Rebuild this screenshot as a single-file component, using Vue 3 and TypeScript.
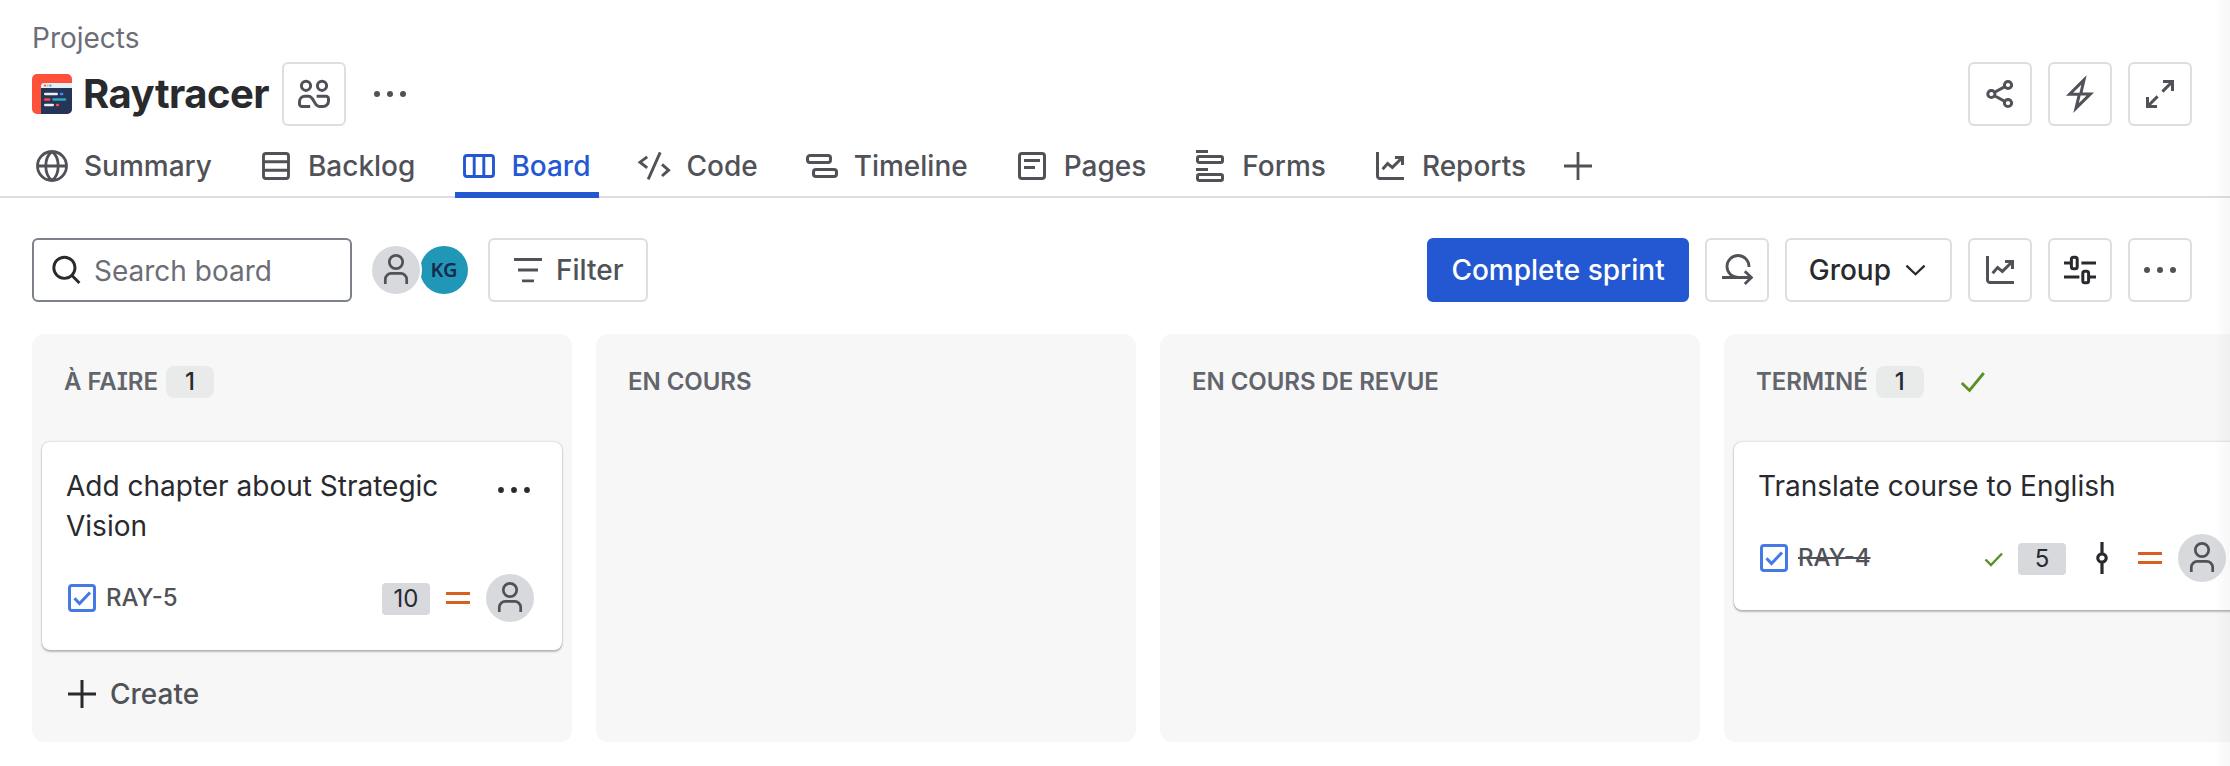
<script setup lang="ts">
interface Shape {
  d: string
  w?: number
}

const chart: Shape = {
  d: 'M1.75 1v12a1.25 1.25 0 0 0 1.25 1.25h12M4.3 9.6l2.5-2.8 2.4 1.9 4.9-4.8M10.5 3.75h3.75V7.5',
}

const icons: Record<string, Shape> = {
  globe: {
    d: 'M8 .75a7.25 7.25 0 1 0 0 14.5A7.25 7.25 0 0 0 8 .75zM8 .75C6 2.2 4.9 5 4.9 8S6 13.8 8 15.25C10 13.8 11.1 11 11.1 8S10 2.2 8 .75zM.75 8h14.5',
    w: 1.4,
  },
  backlog: {
    d: 'M3 1.75h10c.7 0 1.25.55 1.25 1.25v10c0 .7-.55 1.25-1.25 1.25H3c-.7 0-1.25-.55-1.25-1.25V3c0-.7.55-1.25 1.25-1.25zM1.75 5.9h12.5M1.75 10.1h12.5',
    w: 1.45,
  },
  board: {
    d: 'M2 2.75h12c.7 0 1.25.55 1.25 1.25v8c0 .7-.55 1.25-1.25 1.25H2C1.3 13.25.75 12.7.75 12V4c0-.7.55-1.25 1.25-1.25zM5.6 2.75v10.5M10.4 2.75v10.5',
    w: 1.45,
  },
  code: { d: 'M4.6 3.4L1 6.1l3.6 2.8M11.1 1.2L5.1 14.7M12 7.2l3.3 2.9L12 13', w: 1.45 },
  timeline: {
    d: 'M2 2.75h9a1.25 1.25 0 0 1 1.25 1.25v1a1.25 1.25 0 0 1-1.25 1.25H2A1.25 1.25 0 0 1 .75 5V4A1.25 1.25 0 0 1 2 2.75zM5 9.75h9A1.25 1.25 0 0 1 15.25 11v1A1.25 1.25 0 0 1 14 13.25H5A1.25 1.25 0 0 1 3.75 12v-1A1.25 1.25 0 0 1 5 9.75z',
  },
  pages: {
    d: 'M3 1.75h10c.7 0 1.25.55 1.25 1.25v10c0 .7-.55 1.25-1.25 1.25H3c-.7 0-1.25-.55-1.25-1.25V3c0-.7.55-1.25 1.25-1.25zM4 5.25h8M4 8.75h5.5',
  },
  forms: {
    d: 'M1 .75h6M1 9.75h6M2.6 3.25h10.8c.5 0 .85.35.85.85v1.3c0 .5-.35.85-.85.85H2.6c-.5 0-.85-.35-.85-.85V4.1c0-.5.35-.85.85-.85zM2.6 12.25h10.8c.5 0 .85.35.85.85v1.3c0 .5-.35.85-.85.85H2.6c-.5 0-.85-.35-.85-.85v-1.3c0-.5.35-.85.85-.85z',
  },
  chart,
  plus: { d: 'M8 1v14M1 8h14', w: 1.4 },
  team: {
    d: 'M4 1.6a2.3 2.3 0 1 0 0 4.6 2.3 2.3 0 0 0 0-4.6zM12 1.6a2.3 2.3 0 1 0 0 4.6 2.3 2.3 0 0 0 0-4.6zM6.1 14.25H2A1.25 1.25 0 0 1 .75 13v-1.1A2.75 2.75 0 0 1 3.5 9.15h1.7c3 0 2.600 5.100 5.600 5.100h1.700a2.750 2.750 0 0 0 2.750-2.750v-1.100A1.250 1.250 0 0 0 14 9.150H9.300',
    w: 1.5,
  },
  share: {
    d: 'M3.7 6.2a1.8 1.8 0 1 0 0 3.6 1.8 1.8 0 0 0 0-3.6zM12 1.7a1.8 1.8 0 1 0 0 3.6 1.8 1.8 0 0 0 0-3.6zM12 10.7a1.8 1.8 0 1 0 0 3.6 1.8 1.8 0 0 0 0-3.6zM5.3 7.1l5.1-2.8M5.3 8.9l5.1 2.8',
  },
  bolt: { d: 'M10 .95L2.8 8.1h4.9L6 15.05 13.2 7.950H8.350z', w: 1.5 },
  expand: { d: 'M9.5 1.75h4.75V6.5M14.25 1.75L9.2 6.8M6.5 14.25H1.75V9.5M1.75 14.25L6.8 9.2' },
  search: { d: 'M7.2 1.6a5.3 5.3 0 1 0 0 10.6 5.3 5.3 0 0 0 0-10.6zM11 10.7l3.7 3.8', w: 1.45 },
  filter: { d: 'M1 2.75h14M3 8h10M5 13.4h6', w: 1.4 },
  sprint: {
    d: 'M14 6.5v-.25A5.5 5.5 0 1 0 8.5 11.75M.5 11.75h14.7M11.9 8.6l3.3 3.15-3.3 3.2',
    w: 1.4,
  },
  sliders: {
    d: 'M0 4.5h3.2M8.7 4.5H16M0 11.5h7.7M12.8 11.5H16M4.7 1.6h.9c.6 0 1 .4 1 1v3.8c0 .6-.4 1-1 1h-.9c-.6 0-1-.4-1-1V2.6c0-.6.4-1 1-1zM10.4 8.6h.9c.6 0 1 .4 1 1v3.8c0 .6-.4 1-1 1h-.9c-.6 0-1-.4-1-1V9.6c0-.6.4-1 1-1z',
  },
  commit: { d: 'M8 0v5.8M8 10.2V16M8 5.9a2.1 2.1 0 1 0 0 4.2 2.1 2.1 0 0 0 0-4.2z', w: 1.6 },
  priority: { d: 'M2 5.75h12M2 10.25h12', w: 1.6 },
}

interface Tab {
  label: string
  icon: string
  active?: boolean
}

const tabs: Tab[] = [
  { label: 'Summary', icon: 'globe' },
  { label: 'Backlog', icon: 'backlog' },
  { label: 'Board', icon: 'board', active: true },
  { label: 'Code', icon: 'code' },
  { label: 'Timeline', icon: 'timeline' },
  { label: 'Pages', icon: 'pages' },
  { label: 'Forms', icon: 'forms' },
  { label: 'Reports', icon: 'chart' },
]

const headerActions = ['share', 'bolt', 'expand']

interface Card {
  title: string
  issue: string
  points: number
  done?: boolean
  commits?: boolean
  menu?: boolean
}

interface Column {
  name: string
  done?: boolean
  create?: boolean
  cards: Card[]
}

const columns: Column[] = [
  {
    name: 'À FAIRE',
    create: true,
    cards: [{ title: 'Add chapter about Strategic Vision', issue: 'RAY-5', points: 10, menu: true }],
  },
  { name: 'EN COURS', cards: [] },
  { name: 'EN COURS DE REVUE', cards: [] },
  {
    name: 'TERMINÉ',
    done: true,
    cards: [{ title: 'Translate course to English', issue: 'RAY-4', points: 5, done: true, commits: true }],
  },
]
</script>

<template>
  <div class="page">
    <header class="header">
      <div class="crumb">Projects</div>
      <div class="title-row">
        <svg class="logo" viewBox="0 0 40 40">
          <rect width="40" height="40" rx="5" fill="#ff5039" />
          <path d="M9 11.5A2.5 2.5 0 0 1 11.500 9H40v26a5 5 0 0 1-5 5H9z" fill="#253555" />
          <path d="M9 14v-2.500A2.500 2.500 0 0 1 11.500 9H40v5z" fill="#e6eff8" />
          <circle cx="13" cy="11.600" r="1.100" fill="#ff5039" />
          <circle cx="15.700" cy="11.600" r="1.100" fill="#f5b83d" />
          <circle cx="18.400" cy="11.600" r="1.100" fill="#2ba9c7" />
          <g stroke-width="2.400" stroke-linecap="round">
            <path d="M13.200 20h11.600M13.200 31h7.600" stroke="#e6eff8" />
            <path d="M29 20h1.200" stroke="#4688ff" />
            <path d="M13.200 25.500h4M25 31h1" stroke="#ff4a3d" />
            <path d="M21.500 25.500h11.500" stroke="#2ba9c7" />
          </g>
        </svg>
        <h1>Raytracer</h1>
        <button class="btn square team">
          <svg class="icon" viewBox="0 0 16 16"><path :d="icons.team.d" :stroke-width="icons.team.w" /></svg>
        </button>
        <svg class="dots more" viewBox="0 0 32 8">
          <circle cx="3" cy="4" r="3" /><circle cx="16" cy="4" r="3" /><circle cx="29" cy="4" r="3" />
        </svg>
        <div class="actions">
          <button v-for="name in headerActions" :key="name" class="btn square">
            <svg class="icon" viewBox="0 0 16 16">
              <path :d="icons[name].d" :stroke-width="icons[name].w ?? 1.5" />
            </svg>
          </button>
        </div>
      </div>
      <nav class="tabs">
        <a v-for="tab in tabs" :key="tab.label" class="tab" :class="{ active: tab.active }">
          <svg class="icon" viewBox="0 0 16 16">
            <path :d="icons[tab.icon].d" :stroke-width="icons[tab.icon].w ?? 1.5" />
          </svg>
          <span>{{ tab.label }}</span>
        </a>
        <svg class="icon add-tab" viewBox="0 0 16 16"><path :d="icons.plus.d" :stroke-width="icons.plus.w" /></svg>
      </nav>
    </header>

    <section class="toolbar">
      <div class="search">
        <svg class="icon" viewBox="0 0 16 16"><path :d="icons.search.d" :stroke-width="icons.search.w" /></svg>
        <span>Search board</span>
      </div>
      <div class="people">
        <div class="avatar ring">
          <svg viewBox="0 0 48 48">
            <circle cx="24" cy="16" r="6.700" />
            <path d="M13.300 38v-4.500a6 6 0 0 1 6-6.100h9.400a6 6 0 0 1 6 6.100V38" />
          </svg>
        </div>
        <div class="avatar initials">KG</div>
      </div>
      <button class="btn filter">
        <svg class="icon" viewBox="0 0 16 16"><path :d="icons.filter.d" :stroke-width="icons.filter.w" /></svg>
        Filter
      </button>
      <div class="tools">
        <button class="btn primary">Complete sprint</button>
        <button class="btn square">
          <svg class="icon" viewBox="0 0 16 16"><path :d="icons.sprint.d" :stroke-width="icons.sprint.w" /></svg>
        </button>
        <button class="btn group">
          Group
          <svg class="chevron" viewBox="0 0 22 12"><path d="M1.500 1.500L11 10.500l9.500-9" /></svg>
        </button>
        <button class="btn square">
          <svg class="icon" viewBox="0 0 16 16"><path :d="icons.chart.d" stroke-width="1.5" /></svg>
        </button>
        <button class="btn square dark">
          <svg class="icon" viewBox="0 0 16 16"><path :d="icons.sliders.d" stroke-width="1.5" /></svg>
        </button>
        <button class="btn square">
          <svg class="dots" viewBox="0 0 32 8">
            <circle cx="3" cy="4" r="3" /><circle cx="16" cy="4" r="3" /><circle cx="29" cy="4" r="3" />
          </svg>
        </button>
      </div>
    </section>

    <main class="board">
      <section v-for="column in columns" :key="column.name" class="column">
        <div class="column-head">
          <h2>{{ column.name }}</h2>
          <span v-if="column.cards.length" class="count">{{ column.cards.length }}</span>
          <svg v-if="column.done" class="check" viewBox="0 0 26 22"><path d="M1.800 12L9.500 19.500 23.800 2" /></svg>
        </div>
        <article v-for="card in column.cards" :key="card.issue" class="card">
          <div class="card-top">
            <p>{{ card.title }}</p>
            <svg v-if="card.menu" class="dots card-menu" viewBox="0 0 34 8">
              <circle cx="4" cy="4" r="2.900" /><circle cx="17" cy="4" r="2.900" /><circle cx="30" cy="4" r="2.900" />
            </svg>
          </div>
          <div class="card-foot">
            <svg class="task" viewBox="0 0 28 28">
              <rect x="1.500" y="1.500" width="25" height="25" rx="2.500" />
              <path d="M6.500 14.300l5 5.200L22 8.500" />
            </svg>
            <span class="issue" :class="{ struck: card.done }">{{ card.issue }}</span>
            <div class="meta">
              <svg v-if="card.done" class="check small" viewBox="0 0 20 15"><path d="M1.500 7.500l5.500 5.600L18 1.500" /></svg>
              <span class="points">{{ card.points }}</span>
              <svg v-if="card.commits" class="icon commit" viewBox="0 0 16 16">
                <path :d="icons.commit.d" :stroke-width="icons.commit.w" />
              </svg>
              <svg class="icon priority" viewBox="0 0 16 16">
                <path :d="icons.priority.d" :stroke-width="icons.priority.w" />
              </svg>
              <div class="avatar">
                <svg viewBox="0 0 48 48">
                  <circle cx="24" cy="16" r="6.700" />
                  <path d="M13.300 38v-4.500a6 6 0 0 1 6-6.100h9.400a6 6 0 0 1 6 6.100V38" />
                </svg>
              </div>
            </div>
          </div>
        </article>
        <div v-if="column.create" class="create">
          <svg class="icon" viewBox="0 0 16 16"><path :d="icons.plus.d" stroke-width="1.5" /></svg>
          Create
        </div>
      </section>
    </main>
    <div class="edge"></div>
  </div>
</template>

<style>
body {
  margin: 0;
  background: #fff;
}
</style>

<style scoped>
.page {
  position: relative;
  box-sizing: border-box;
  width: 2230px;
  height: 766px;
  overflow: hidden;
  background: #fff;
  color: #292a2e;
  font-family: Inter, 'Liberation Sans', sans-serif;
  font-size: 28px;
  font-weight: 500;
  line-height: 32px;
}

.page *,
.page *::after {
  box-sizing: border-box;
}

.icon {
  flex: none;
  display: block;
  width: 32px;
  height: 32px;
  overflow: visible;
  fill: none;
  stroke: currentColor;
}

.header {
  padding-top: 22px;
  height: 198px;
  border-bottom: 2px solid #dddee1;
}

.crumb {
  margin-left: 32px;
  height: 32px;
  color: #6b6e76;
  font-weight: 400;
}

.title-row {
  display: flex;
  align-items: center;
  height: 64px;
  margin-top: 8px;
  padding: 0 38px 0 32px;
}

.logo {
  width: 40px;
  height: 40px;
  margin-right: 11px;
}

h1 {
  width: 199px;
  margin: 0;
  font-size: 40px;
  font-weight: 700;
  line-height: 48px;
  letter-spacing: -0.5px;
}

.btn {
  display: flex;
  align-items: center;
  justify-content: center;
  flex: none;
  height: 64px;
  margin: 0;
  padding: 0 22px;
  border: 2px solid #dddee1;
  border-radius: 6px;
  background: #fff;
  color: #505258;
  font: inherit;
}

.btn.square {
  width: 64px;
  padding: 0;
}

.btn.dark,
.btn.group {
  color: #292a2e;
}

.btn.primary {
  border-color: #2458d3;
  background: #2458d3;
  color: #fff;
}

.dots {
  display: block;
  flex: none;
  width: 32px;
  height: 8px;
  fill: #505258;
}

.more {
  margin-left: 28px;
}

.actions {
  display: flex;
  gap: 16px;
  margin-left: auto;
}

.tabs {
  display: flex;
  gap: 48px;
  height: 72px;
  padding: 24px 0 0 36px;
  color: #505258;
}

.tab {
  position: relative;
  display: flex;
  gap: 16px;
}

.tab.active {
  color: #2458d3;
}

.tab.active::after {
  content: '';
  position: absolute;
  left: -8px;
  right: -9px;
  top: 42px;
  height: 6px;
  background: #2458d3;
}

.add-tab {
  margin-left: -12px;
}

.toolbar {
  display: flex;
  align-items: center;
  height: 64px;
  margin-top: 40px;
  padding: 0 38px 0 32px;
}

.search {
  display: flex;
  align-items: center;
  gap: 12px;
  width: 320px;
  height: 64px;
  padding-left: 16px;
  border: 2px solid #7d818a;
  border-radius: 6px;
  color: #292a2e;
}

.search span {
  padding-top: 1px;
  color: #6b6e76;
  font-weight: 400;
}

.people {
  display: flex;
  margin: 0 20px;
}

.avatar {
  flex: none;
  width: 48px;
  height: 48px;
  border-radius: 50%;
  background: #d8d9dd;
}

.avatar svg {
  display: block;
  fill: none;
  stroke: #505258;
  stroke-width: 2.7;
}

.ring {
  position: relative;
  z-index: 1;
  box-shadow: 0 0 0 2px #fff;
}

.initials {
  background: #2097b7;
  color: #172b4d;
  font: 600 20px/48px 'Noto Sans', sans-serif;
  text-align: center;
}

.filter,
.create {
  gap: 12px;
}

.tools {
  display: flex;
  gap: 16px;
  margin-left: auto;
}

.chevron {
  width: 21px;
  height: 12px;
  margin: 0 2px 0 14px;
  fill: none;
  stroke: currentColor;
  stroke-width: 2.4;
}

.board {
  display: grid;
  grid-template-columns: repeat(4, 540px);
  gap: 24px;
  height: 408px;
  margin: 32px 0 0 32px;
}

.column {
  padding: 0 10px;
  border-radius: 12px;
  background: #f7f7f7;
}

.column-head {
  display: flex;
  align-items: center;
  height: 96px;
  margin-bottom: 12px;
  padding-left: 22px;
}

h2 {
  margin: 0;
  color: #62656c;
  font-size: 24px;
  font-weight: 600;
  letter-spacing: -0.05px;
  font-feature-settings: 'cv08';
}

.count,
.points {
  width: 48px;
  height: 32px;
  border-radius: 8px;
  background: #e9ebea;
  font-size: 24px;
  text-align: center;
}

.count {
  margin-left: 8px;
}

.check {
  width: 26px;
  height: 22px;
  margin-left: 36px;
  fill: none;
  stroke: #5b9025;
  stroke-width: 2.8;
}

.card {
  width: 520px;
  padding: 24px 28px 28px 24px;
  border-radius: 8px;
  background: #fff;
  box-shadow: 0 2px 2px rgba(30, 31, 33, 0.25), 0 0 2px rgba(30, 31, 33, 0.31);
}

.card-top {
  display: flex;
  justify-content: space-between;
}

p {
  width: 400px;
  margin: 0;
  font-weight: 400;
  line-height: 40px;
}

.card-menu {
  width: 34px;
  margin: 20px 3px 0 0;
  fill: #292a2e;
}

.card-foot {
  display: flex;
  align-items: center;
  height: 48px;
  margin-top: 28px;
  padding-left: 2px;
}

.task {
  width: 28px;
  height: 28px;
  fill: none;
  stroke: #4479e6;
  stroke-width: 3;
}

.issue {
  margin: -1px 0 0 10px;
  color: #505258;
  font-size: 24px;
}

.struck {
  text-decoration: line-through;
}

.meta {
  display: flex;
  align-items: center;
  margin-left: auto;
}

.check.small {
  width: 20px;
  height: 15px;
  margin: 3px 14px 0 0;
  stroke-width: 2.4;
}

.points {
  margin-top: 1px;
  border-radius: 4px;
  background: #d8d9dd;
  font-weight: 400;
}

.commit {
  margin-left: 20px;
  color: #292a2e;
}

.priority {
  margin: 0 12px;
  color: #d6601f;
}

.commit + .priority {
  margin-left: 16px;
}

.create {
  display: flex;
  align-items: center;
  height: 32px;
  margin-top: 28px;
  padding-left: 24px;
  color: #505258;
}

.create .icon {
  color: #292a2e;
}

.edge {
  position: absolute;
  top: 0;
  right: 0;
  bottom: 0;
  width: 16px;
  background: linear-gradient(90deg, rgba(30, 31, 33, 0), rgba(30, 31, 33, 0.035));
}
</style>
